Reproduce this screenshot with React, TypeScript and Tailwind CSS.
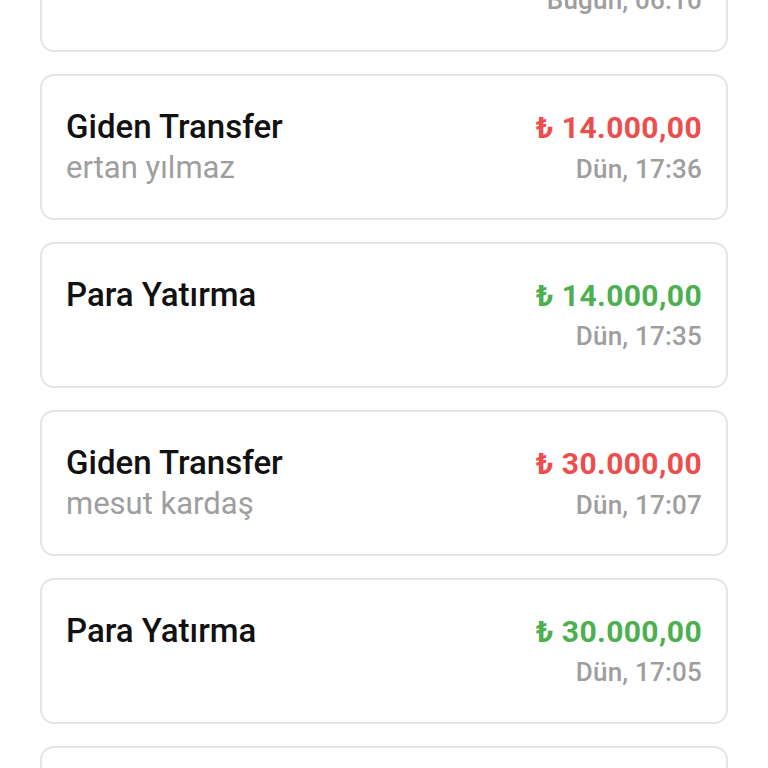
type Tx = {
  title: string;
  party?: string;
  amount: string;
  kind: "in" | "out";
  when: string;
};

const txs: Tx[] = [
  { title: "Para Yatırma", amount: "₺ 5.000,00", kind: "in", when: "Bugün, 06:10" },
  { title: "Giden Transfer", party: "ertan yılmaz", amount: "₺ 14.000,00", kind: "out", when: "Dün, 17:36" },
  { title: "Para Yatırma", amount: "₺ 14.000,00", kind: "in", when: "Dün, 17:35" },
  { title: "Giden Transfer", party: "mesut kardaş", amount: "₺ 30.000,00", kind: "out", when: "Dün, 17:07" },
  { title: "Para Yatırma", amount: "₺ 30.000,00", kind: "in", when: "Dün, 17:05" },
  { title: "Giden Transfer", party: "ertan yılmaz", amount: "₺ 10.000,00", kind: "out", when: "Dün, 16:48" },
];

function TxCard({ tx }: { tx: Tx }) {
  return (
    <div className="h-[146px] shrink-0 rounded-[14px] border-2 border-[#e6e6e6] bg-white px-[24px] pt-[31px]">
      <div className="flex items-baseline justify-between leading-[40px]">
        <span className="text-[33px] font-medium text-[#111111]">{tx.title}</span>
        <span
          className={
            tx.kind === "out"
              ? "text-[30px] font-bold tracking-[0.4px] text-[#ec4e4e]"
              : "text-[30px] font-bold tracking-[0.4px] text-[#4caf50]"
          }
        >
          {tx.amount}
        </span>
      </div>
      <div className="mt-[2px] flex items-baseline justify-between leading-[36px]">
        <span className="text-[31px] text-[#9e9e9e]">{tx.party ?? ""}</span>
        <span className="text-[26px] font-medium tracking-[0.2px] text-[#9e9e9e]">{tx.when}</span>
      </div>
    </div>
  );
}

export default function App() {
  return (
    <div
      className="h-[768px] w-[768px] overflow-hidden bg-white"
      style={{ fontFamily: "Roboto, 'Noto Sans', sans-serif" }}
    >
      <div className="-mt-[94px] flex flex-col gap-[22px] px-[40px]">
        {txs.map((tx, i) => (
          <TxCard key={i} tx={tx} />
        ))}
      </div>
    </div>
  );
}
